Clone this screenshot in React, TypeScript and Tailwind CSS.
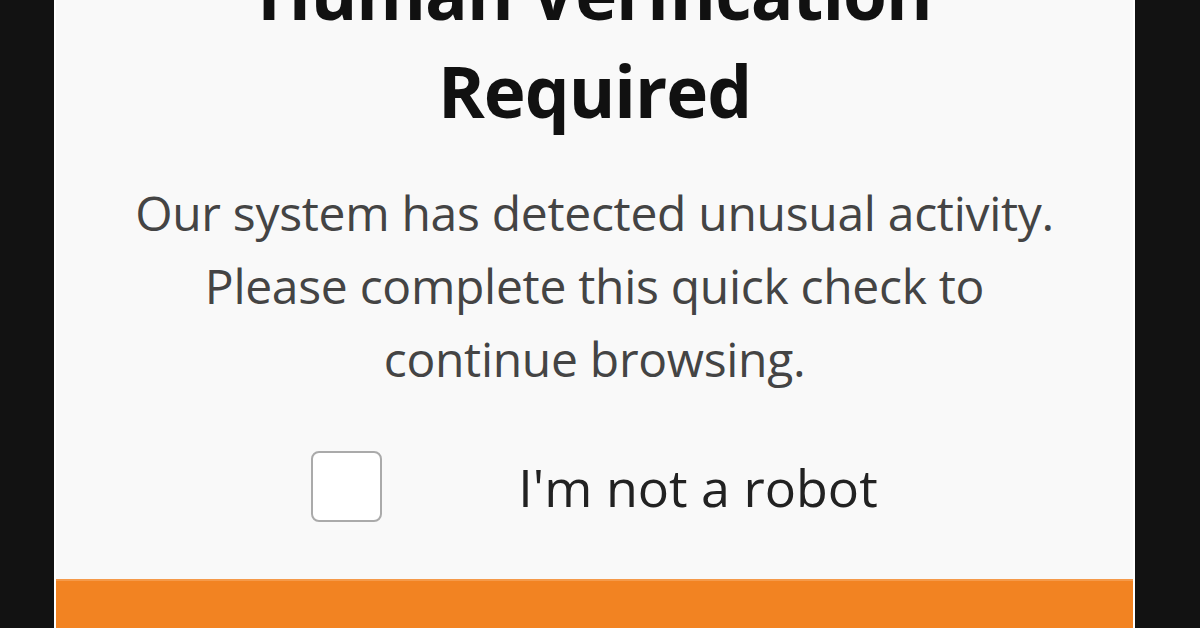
import React from 'react';

export default function App() {
  return (
    <div className="h-[628px] w-[1200px] overflow-hidden bg-[#121212] pl-[54px]">
      <div className="w-[1081px] h-full bg-[#f9f9f9] border-x-2 border-white flex flex-col items-center font-['Open_Sans',sans-serif]">
        <h1 className="mt-[-56px] text-center font-bold text-[71px] leading-[98px] text-[#111] tracking-[-1px]">
          Human Verification
          <br />
          Required
        </h1>
        <p className="mt-[36px] text-center text-[48px] leading-[73px] text-[#444] tracking-[-0.3px]">
          Our system has detected unusual activity.
          <br />
          Please complete this quick check to
          <br />
          continue browsing.
        </p>
        <label className="mt-[56px] flex items-center gap-[136px]">
          <span className="w-[71px] h-[71px] rounded-[8px] border-2 border-[#aaa] bg-white" />
          <span className="text-[52px] text-[#222] leading-none">I'm not a robot</span>
        </label>
        <div className="mt-auto w-full h-[49px] bg-[#f28322] border-t-2 border-[#f59a4a]" />
      </div>
    </div>
  );
}
